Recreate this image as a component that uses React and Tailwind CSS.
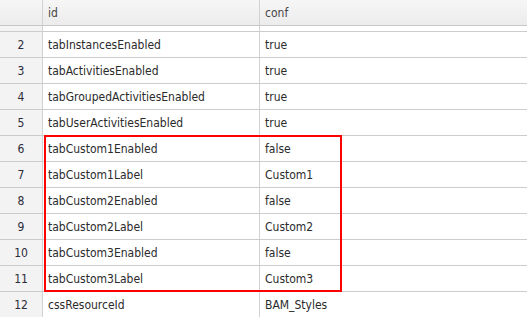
import React from 'react'

const ROWS = [
  [2, 'tabInstancesEnabled', 'true'],
  [3, 'tabActivitiesEnabled', 'true'],
  [4, 'tabGroupedActivitiesEnabled', 'true'],
  [5, 'tabUserActivitiesEnabled', 'true'],
  [6, 'tabCustom1Enabled', 'false'],
  [7, 'tabCustom1Label', 'Custom1'],
  [8, 'tabCustom2Enabled', 'false'],
  [9, 'tabCustom2Label', 'Custom2'],
  [10, 'tabCustom3Enabled', 'false'],
  [11, 'tabCustom3Label', 'Custom3'],
  [12, 'cssResourceId', 'BAM_Styles'],
]

const font = { fontFamily: '"DejaVu Sans Condensed", "DejaVu Sans", sans-serif' }

function Row({ n, id, conf }) {
  return (
    <div className="flex h-[26px] border-b border-[#cccccc]">
      <div className="w-[43px] flex-none flex items-center justify-center bg-[#f3f3f3] border-r border-[#d2d2d2] text-[#2b2b3a]">
        {n}
      </div>
      <div className="w-[217px] flex-none flex items-center pl-[5px] border-r border-[#d2d2d2] text-[#2b2b2b]">
        {id}
      </div>
      <div className="flex-1 flex items-center pl-[5px] text-[#2b2b2b]">{conf}</div>
    </div>
  )
}

export default function App() {
  const top = ROWS.slice(0, 4)
  const boxed = ROWS.slice(4, 10)
  const rest = ROWS.slice(10)

  return (
    <div className="w-[527px] h-[317px] overflow-hidden bg-white text-[12px]" style={font}>
      {/* header */}
      <div className="flex h-[26px] border-b border-[#c8c8c8] bg-gradient-to-b from-[#f6f6f6] to-[#ececec] text-[#444]">
        <div className="w-[43px] flex-none border-r border-[#d2d2d2]" />
        <div className="w-[217px] flex-none flex items-center pl-[5px] border-r border-[#d2d2d2]">id</div>
        <div className="flex-1 flex items-center pl-[5px]">conf</div>
      </div>

      {/* strip */}
      <div className="flex h-[6px] border-b border-[#cccccc]">
        <div className="w-[43px] flex-none bg-[#f3f3f3] border-r border-[#d2d2d2]" />
        <div className="w-[217px] flex-none border-r border-[#d2d2d2]" />
        <div className="flex-1" />
      </div>

      {top.map(([n, id, conf]) => <Row key={n} n={n} id={id} conf={conf} />)}

      <div className="relative">
        {boxed.map(([n, id, conf]) => <Row key={n} n={n} id={id} conf={conf} />)}
        <div className="absolute top-[-1px] left-[44px] w-[298px] h-[157px] border-2 border-[#ff0000] pointer-events-none" />
      </div>

      {rest.map(([n, id, conf]) => <Row key={n} n={n} id={id} conf={conf} />)}
    </div>
  )
}
